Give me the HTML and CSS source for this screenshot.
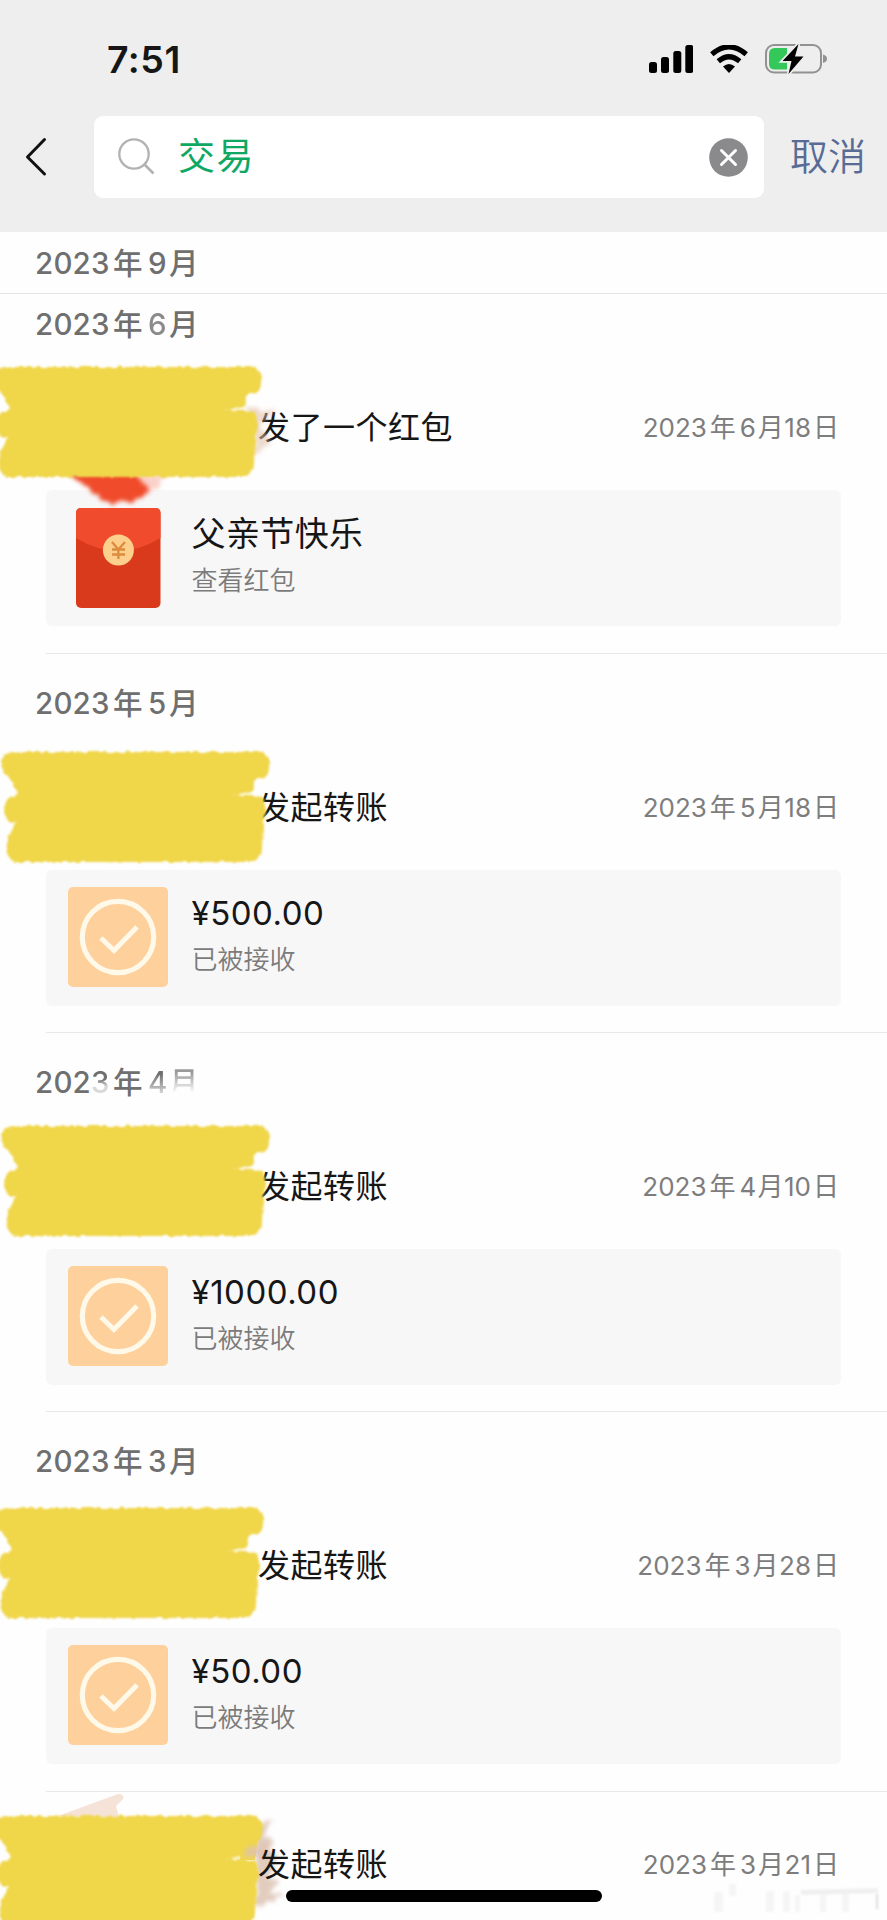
FILE: index.html
```html
<!DOCTYPE html>
<html lang="zh-CN">
<head>
<meta charset="utf-8">
<title>交易</title>
<link rel="stylesheet" href="styles.css">
</head>
<body>
<svg class="defs" width="0" height="0">
  <defs>
    <filter id="rough" x="-5%" y="-10%" width="110%" height="120%">
      <feTurbulence type="fractalNoise" baseFrequency="0.16" numOctaves="2" seed="4" result="n"/>
      <feDisplacementMap in="SourceGraphic" in2="n" scale="5" xChannelSelector="R" yChannelSelector="G"/>
      <feGaussianBlur stdDeviation="0.9"/>
    </filter>
    <filter id="smear" x="-20%" y="-20%" width="140%" height="140%">
      <feTurbulence type="fractalNoise" baseFrequency="0.12" numOctaves="2" seed="8" result="n"/>
      <feDisplacementMap in="SourceGraphic" in2="n" scale="12" xChannelSelector="R" yChannelSelector="G"/>
      <feGaussianBlur stdDeviation="2"/>
    </filter>
    <path id="brush" d="M4 5Q8 2 30 2L262 2Q271 4 269 17Q269 27 263 28L255 30L252 42L232 45L260 46Q266 49 265 60L263 78L262 99Q260 112 251 112L14 112Q7 111 7 98Q7 85 13 79L15 73Q5 71 4 62Q3 51 10 47L18 44L12 32L8 26Q1 23 1 15Q1 8 4 5Z"/>
    <symbol id="check" viewBox="0 0 100 100">
      <rect width="100" height="100" rx="5" fill="#fdd09c"/>
      <circle cx="50" cy="50" r="35.700" fill="none" stroke="#fff9e9" stroke-width="5.200"/>
      <path d="M33 51L46 63.500L69 40" fill="none" stroke="#fff9e9" stroke-width="5"/>
    </symbol>
  </defs>
</svg>
<div class="screen">
  <header class="top">
    <div class="status">
      <span class="time">7:51</span>
      <svg class="signal" width="44" height="28" viewBox="0 0 44 28"><rect x="0" y="17" width="8" height="11" rx="2.500"/><rect x="12" y="12" width="8" height="16" rx="2.500"/><rect x="24.300" y="6" width="8" height="22" rx="2.500"/><rect x="36.300" y="0" width="8" height="28" rx="2.500"/></svg>
      <svg class="wifi" width="38" height="28" viewBox="0 0 38 28"><g fill="none" stroke="#000" stroke-width="5.200"><path d="M1.800 9.300Q19-5.500 36.200 9.300"/><path d="M8.300 16.300Q19 7.300 29.700 16.300"/></g><path d="M19 28L13 21.500Q19 16.500 25 21.500Z"/></svg>
      <svg class="battery" width="63" height="32" viewBox="0 0 63 32"><rect x="1" y="2" width="55" height="27.500" rx="8" fill="none" stroke="#929292" stroke-width="2"/><path d="M10 5H22V26.500H10Q4 26.500 4 21V11Q4 5 10 5Z" fill="#34c759"/><path d="M58 11.500Q62 12.500 62 15.800T58 20Z" fill="#929292"/><path d="M33.500 1L17.500 18H26.500L23.500 31L38.500 13.500H30Z" stroke="#eee" stroke-width="3.500" paint-order="stroke"/></svg>
    </div>
    <div class="searchbar">
      <svg class="back" width="22" height="40" viewBox="0 0 22 40"><path d="M19.500 2.500L2.500 20L19.500 37" fill="none" stroke="#111" stroke-width="3" stroke-linecap="round" stroke-linejoin="round"/></svg>
      <div class="field">
        <svg width="37" height="38" viewBox="0 0 37 38"><circle cx="16" cy="16" r="14.700" fill="none" stroke="#b2b2b2" stroke-width="2.300"/><path d="M26 26L35.500 35.500" stroke="#b2b2b2" stroke-width="2.600"/></svg>
        <span class="query">交易</span>
        <svg width="39" height="39" viewBox="0 0 39 39"><circle cx="19.500" cy="19.500" r="19.300" fill="#8a8a8c"/><path d="M12.500 12.500L26.500 26.500M26.500 12.500L12.500 26.500" stroke="#fff" stroke-width="3" stroke-linecap="round"/></svg>
      </div>
      <span class="cancel">取消</span>
    </div>
  </header>

  <main>
    <h2 class="month pinned"><span class="yr">2023</span><span class="nian">年</span><span class="mo">9</span><span>月</span></h2>

    <section class="group first">
      <h2 class="month"><span class="yr">2023</span><span class="nian">年</span><span class="mo soft">6</span><span>月</span></h2>
      <div class="row">
        <span class="title">发了一个红包</span>
        <span class="date"><span class="dyr">2023</span><span class="dnian">年</span><span class="dm">6</span><span class="dyue">月</span><span class="dd">18</span><span>日</span></span>
        <svg class="cover c1" width="300" height="170" viewBox="0 -8 300 170">
          <path d="M68 106L134 106L148 124Q142 135 130 138Q106 141 92 128Z" fill="#f04b2c" filter="url(#smear)"/>
          <path d="M134 108L168 108Q160 124 146 130Z" fill="#f04b2c" opacity=".25" filter="url(#smear)"/>
          <path d="M246 42L276 46L262 56L268 78L256 92Z" fill="#dfbda6" opacity=".55" filter="url(#smear)"/>
          <use href="#brush" x="-8" fill="#f0d64a" filter="url(#rough)"/>
        </svg>
      </div>
      <div class="card">
        <svg class="pic" width="100" height="101" viewBox="0 0 100 101"><rect x="8" y="1" width="84.500" height="100" rx="5" fill="#d93a1b"/><path d="M13 1H87.500Q92.500 1 92.500 6V31Q50 57 8 31V6Q8 1 13 1Z" fill="#f04b2c"/><circle cx="50.400" cy="43" r="15.500" fill="#fcd08c"/><path d="M44 35L50.400 42.500L57 35M50.400 42V52M44 42.500H57M44 47.500H57" fill="none" stroke="#dc8c3c" stroke-width="2.300"/></svg>
        <div class="info"><div class="name">父亲节快乐</div><div class="sub">查看红包</div></div>
      </div>
    </section>

    <section class="group">
      <h2 class="month"><span class="yr">2023</span><span class="nian">年</span><span class="mo">5</span><span>月</span></h2>
      <div class="row">
        <span class="title">发起转账</span>
        <span class="date"><span class="dyr">2023</span><span class="dnian">年</span><span class="dm">5</span><span class="dyue">月</span><span class="dd">18</span><span>日</span></span>
        <svg class="cover c2" width="300" height="130" viewBox="0 -8 300 130"><use href="#brush" fill="#f0d64a" filter="url(#rough)"/></svg>
      </div>
      <div class="card">
        <svg class="pic" width="100" height="100"><use href="#check"/></svg>
        <div class="info"><div class="name amount">¥500.00</div><div class="sub">已被接收</div></div>
      </div>
    </section>

    <section class="group">
      <h2 class="month"><span class="yr">202<span class="fade3">3</span></span><span class="nian">年</span><span class="mo fade4">4</span><span class="fademonth">月</span></h2>
      <div class="row">
        <span class="title">发起转账</span>
        <span class="date"><span class="dyr">2023</span><span class="dnian">年</span><span class="dm">4</span><span class="dyue">月</span><span class="dd">10</span><span>日</span></span>
        <svg class="cover c3" width="300" height="130" viewBox="0 -8 300 130"><use href="#brush" fill="#f0d64a" filter="url(#rough)"/></svg>
      </div>
      <div class="card">
        <svg class="pic" width="100" height="100"><use href="#check"/></svg>
        <div class="info"><div class="name amount">¥1000.00</div><div class="sub">已被接收</div></div>
      </div>
    </section>

    <section class="group">
      <h2 class="month"><span class="yr">2023</span><span class="nian">年</span><span class="mo">3</span><span>月</span></h2>
      <div class="row">
        <span class="title">发起转账</span>
        <span class="date"><span class="dyr">2023</span><span class="dnian">年</span><span class="dm">3</span><span class="dyue">月</span><span class="dd">28</span><span>日</span></span>
        <svg class="cover c4" width="300" height="130" viewBox="0 -8 300 130"><use href="#brush" x="-6" fill="#f0d64a" filter="url(#rough)"/></svg>
      </div>
      <div class="card">
        <svg class="pic" width="100" height="100"><use href="#check"/></svg>
        <div class="info"><div class="name amount">¥50.00</div><div class="sub">已被接收</div></div>
      </div>
    </section>

    <section class="group last">
      <div class="row">
        <svg class="cover c5" width="300" height="140" viewBox="0 -28 300 140">
          <path d="M58 2L118 -20Q125 -20 123 -15L116 -8L119 4Z" fill="#f3d9ca" opacity=".75"/>
          <path d="M254 8L274 6L264 20L272 28L264 36L278 40L270 62L278 68L266 78L284 82L256 92Z" fill="#cfac95" opacity=".6" filter="url(#smear)"/>
          <use href="#brush" x="-7" fill="#f0d64a" filter="url(#rough)"/>
          <path d="M244 16H259L255 46H240Z" fill="#f0d64a"/>
          <path d="M246 34L272 29L270 42L246 44Z" fill="#dfc2b0" opacity=".8" filter="url(#smear)"/>
        </svg>
        <span class="title over">发起转账</span>
        <span class="date"><span class="dyr">2023</span><span class="dnian">年</span><span class="dm">3</span><span class="dyue">月</span><span class="dd">21</span><span>日</span></span>
      </div>
    </section>
  </main>

  <div class="homebar"></div>
  <svg class="mark" width="170" height="32" viewBox="0 0 170 32">
    <g fill="#dedede"><path d="M4 10h9v20H4zM19 2h7v12h-7zM56 9h8v21h-8zM73 9h7v21h-7zM85 13h5v17h-5zM110 13h6v17h-6zM132 12h7v18h-7z" opacity=".28"/><path d="M90 8L168 6V11L92 13Z" opacity=".45"/><path d="M166 12h2v15h-2z"/></g>
  </svg>
</div>
</body>
</html>
```
FILE: styles.css
```css
* { box-sizing: border-box; }
body {
  margin: 0;
  background: #fefefe;
  font-family: Inter, "Noto Sans CJK SC", sans-serif;
  color: #161616;
}
.defs { position: absolute; }
.screen {
  position: relative;
  width: 887px;
  height: 1920px;
  overflow: hidden;
}
.top { height: 232px; background: #eee; }
.status {
  display: flex;
  align-items: center;
  height: 116px;
  padding: 2px 59px 0 107px;
}
.time {
  flex: 1;
  font-size: 37.5px;
  font-weight: 600;
  letter-spacing: 0.5px;
}
.wifi { margin: 0 17px; }
.battery { margin-top: -1px; }
.searchbar { display: flex; align-items: center; height: 82px; }
.back { margin-left: 25px; flex: none; }
.field {
  display: flex;
  align-items: center;
  width: 670px;
  height: 82px;
  margin-left: 47px;
  padding: 0 16px 0 24px;
  background: #fff;
  border-radius: 9px;
}
.query {
  flex: 1;
  margin-left: 23px;
  font-size: 37px;
  letter-spacing: 1.5px;
  line-height: 50px;
  color: #0fa863;
}
.cancel {
  margin: -2px 0 0 26px;
  font-size: 38px;
  line-height: 50px;
  white-space: nowrap;
  color: #576b95;
  font-weight: 350;
}
.month {
  display: flex;
  height: 98px;
  margin: 0;
  padding-left: 35px;
  font-size: 29.5px;
  font-weight: 450;
  line-height: 99px;
  color: #6f6f6f;
}
.yr { width: 78px; letter-spacing: 0.2px; }
.nian { width: 35px; }
.mo { width: 21px; }
.soft { opacity: 0.8; }
.fade3, .fade4, .fademonth {
  color: transparent;
  background: linear-gradient(#6f6f6f 42%, #d8d8d8 62%);
  background-clip: text;
}
.fademonth { background-image: linear-gradient(#999 40%, #fefefe 61%); }
.pinned { height: 62px; line-height: 63px; border-bottom: 1px solid #e5e5e5; }
.first .month { height: 78px; line-height: 61px; }
.group { height: 379.2px; }
.group.first { height: 359.7px; }
.group::after {
  content: "";
  display: block;
  height: 1px;
  margin: 26.500px 0 0 46px;
  background: #e8e8e8;
}
.row {
  position: relative;
  display: flex;
  align-items: center;
  justify-content: space-between;
  height: 112px;
  padding: 0 48px 0 258px;
}
.title { font-size: 32px; line-height: 46px; letter-spacing: 0.5px; }
.over { position: relative; }
.date {
  display: flex;
  font-size: 26px;
  line-height: 40px;
  color: #7d7d7d;
}
.dyr { letter-spacing: 0; margin-right: 3px; }
.dnian { width: 30px; }
.dm { width: 18px; }
.dyue { width: 26.5px; }
.dd { margin-right: 2px; }
.cover { position: absolute; left: 0; }
.c1 { top: -15px; }
.c2 { top: -10px; }
.c3 { top: -15px; }
.c4 { top: -12px; }
.card {
  display: flex;
  width: 795px;
  height: 136px;
  margin: 6px 0 0 46px;
  padding: 17px 22px;
  background: #f7f7f7;
  border-radius: 6px;
}
.pic { flex: none; }
.info { margin-left: 23.5px; padding-top: 3px; }
.name { font-size: 34px; line-height: 48px; letter-spacing: 0.4px; }
.amount { font-size: 33px; line-height: 46px; margin-bottom: 1px; letter-spacing: 0.5px; }
.sub { font-size: 26px; line-height: 46px; color: #7b7b7b; font-weight: 350; }
.last { height: 130px; }
.last .row { height: 148px; }
.last .c5 { top: -5px; }
.homebar {
  position: absolute;
  left: 286px;
  top: 1890px;
  width: 316px;
  height: 12px;
  border-radius: 6px;
  background: #000;
}
.mark { position: absolute; left: 710px; top: 1882px; filter: blur(1.2px); }
```
